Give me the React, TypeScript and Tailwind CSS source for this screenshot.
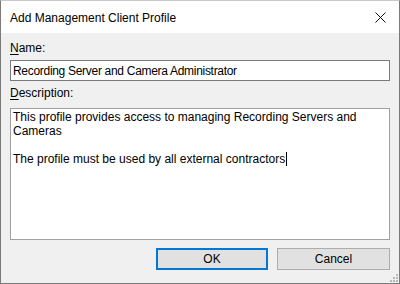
import React from "react";

export default function App() {
  const font = { fontFamily: '"Liberation Sans", Arial, sans-serif' };
  return (
    <div
      className="w-[400px] h-[284px] border border-[#7a7a7a] border-t-[#c8c8c8] bg-[#f0f0f0] flex flex-col text-[12px] text-[#000] relative"
      style={font}
    >
      <div className="h-[32px] bg-white flex items-center justify-between pl-[9px] pr-[12px]">
        <span className="text-[12px] leading-[14px] pt-[1px]">Add Management Client Profile</span>
        <svg width="11" height="11" viewBox="0 0 11 11" className="mr-[1px]">
          <path d="M0.5 0.5 L10.5 10.5 M10.5 0.5 L0.5 10.5" stroke="#111" strokeWidth="1" />
        </svg>
      </div>
      <div className="flex flex-col px-[9px] flex-1">
        <div className="mt-[8px] leading-[14px]">
          <span className="underline underline-offset-[2px]">N</span>ame:
        </div>
        <div className="mt-[5px] h-[21px] bg-white border border-[#7a7a7a] flex items-center px-[2px] leading-[14px] tracking-[-0.3px]">
          Recording Server and Camera Administrator
        </div>
        <div className="mt-[5px] leading-[14px]">
          <span className="underline underline-offset-[2px]">D</span>escription:
        </div>
        <div className="mt-[8px] h-[132px] bg-white border border-[#a0a0a0] px-[2px] pt-[1px] leading-[14px]">
          <div>This profile provides access to managing Recording Servers and</div>
          <div>Cameras</div>
          <div className="h-[14px]"></div>
          <div className="flex items-center">
            The profile must be used by all external contractors
            <span className="inline-block w-[1px] h-[14px] bg-black ml-[1px]"></span>
          </div>
        </div>
        <div className="mt-[8px] flex justify-end gap-[9px] pr-0">
          <button className="w-[112px] h-[22px] bg-[#e1e1e1] border-2 border-[#0078d7] flex items-center justify-center leading-[14px]">
            OK
          </button>
          <button className="w-[113px] h-[22px] bg-[#e1e1e1] border border-[#adadad] flex items-center justify-center leading-[14px]">
            Cancel
          </button>
        </div>
      </div>
      <svg width="8" height="8" viewBox="0 0 8 8" className="absolute right-[1px] bottom-[1px]">
        <rect x="6" y="0" width="2" height="2" fill="#b8b8b8" />
        <rect x="3" y="3" width="2" height="2" fill="#b8b8b8" />
        <rect x="6" y="3" width="2" height="2" fill="#b8b8b8" />
        <rect x="0" y="6" width="2" height="2" fill="#b8b8b8" />
        <rect x="3" y="6" width="2" height="2" fill="#b8b8b8" />
        <rect x="6" y="6" width="2" height="2" fill="#b8b8b8" />
      </svg>
    </div>
  );
}
